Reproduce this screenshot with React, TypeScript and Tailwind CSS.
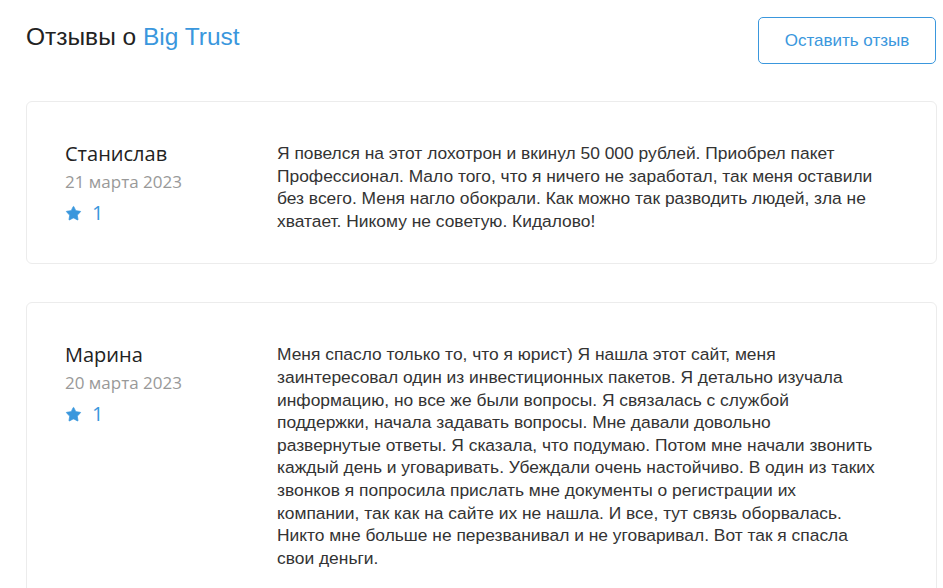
import { Star } from 'lucide-react';

type Review = {
  name: string;
  date: string;
  rating: number;
  text: string;
};

const reviews: Review[] = [
  {
    name: 'Станислав',
    date: '21 марта 2023',
    rating: 1,
    text: 'Я повелся на этот лохотрон и вкинул 50 000 рублей. Приобрел пакет Профессионал. Мало того, что я ничего не заработал, так меня оставили без всего. Меня нагло обокрали. Как можно так разводить людей, зла не хватает. Никому не советую. Кидалово!',
  },
  {
    name: 'Марина',
    date: '20 марта 2023',
    rating: 1,
    text: 'Меня спасло только то, что я юрист) Я нашла этот сайт, меня заинтересовал один из инвестиционных пакетов. Я детально изучала информацию, но все же были вопросы. Я связалась с службой поддержки, начала задавать вопросы. Мне давали довольно развернутые ответы. Я сказала, что подумаю. Потом мне начали звонить каждый день и уговаривать. Убеждали очень настойчиво. В один из таких звонков я попросила прислать мне документы о регистрации их компании, так как на сайте их не нашла. И все, тут связь оборвалась. Никто мне больше не перезванивал и не уговаривал. Вот так я спасла свои деньги.',
  },
];

function ReviewCard({ review }: { review: Review }) {
  return (
    <div className="flex rounded-md border border-[#ececec] bg-white pl-[38px] pt-[37px] pb-[31px]">
      <div className="w-[212px] shrink-0 font-['Open_Sans',sans-serif]">
        <div className="text-[20px] leading-[29px] text-[#222]">{review.name}</div>
        <div className="text-[17px] leading-[27px] text-[#999]">{review.date}</div>
        <div className="mt-[4px] flex items-center gap-[10px] text-[20px] leading-[28px] text-[#3a97dd]">
          <Star className="h-[17px] w-[17px]" fill="currentColor" strokeWidth={1} />
          <span>{review.rating}</span>
        </div>
      </div>
      <p className="w-[602px] shrink-0 pt-[3px] font-['Liberation_Sans',Arial,sans-serif] text-[17.4px] leading-[22.6px] text-[#333]">
        {review.text}
      </p>
    </div>
  );
}

export default function App() {
  return (
    <div className="h-screen overflow-hidden bg-white pl-[26px] pr-[6px] pt-[17px] font-['Liberation_Sans',Arial,sans-serif]">
      <div className="flex items-center justify-between">
        <h1 className="-mt-[6px] text-[24.5px] font-normal text-[#222]">
          Отзывы о <span className="text-[#3a97dd]">Big Trust</span>
        </h1>
        <button className="mr-px h-[47px] w-[178px] rounded-[5px] border border-[#3a97dd] text-[17px] text-[#3a97dd]">
          Оставить отзыв
        </button>
      </div>
      <div className="mt-[37px] flex flex-col gap-[38px]">
        {reviews.map((r) => (
          <ReviewCard key={r.name} review={r} />
        ))}
      </div>
    </div>
  );
}
